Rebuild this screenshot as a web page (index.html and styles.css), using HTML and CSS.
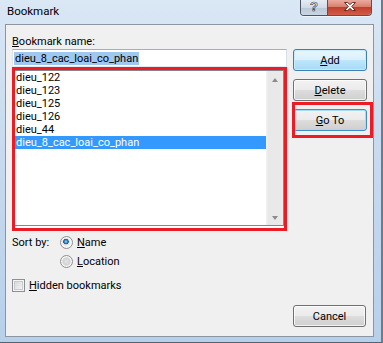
FILE: index.html
```html
<!DOCTYPE html>
<html lang="en">
<head>
  <meta charset="UTF-8" />
  <meta name="viewport" content="width=device-width, initial-scale=1.0"/>
  <title>Bookmark</title>
  <link rel="stylesheet" href="styles.css">
</head>
<body>
  <div class="window">
    <div class="titlebar">
      <span class="title">Bookmark</span>
      <div class="caption">
        <div class="cap-help">?</div>
        <div class="cap-close">
          <svg width="12" height="9" viewBox="0 0 12 9">
            <polygon points="0.5,0.5 3.6,0.5 6,2.6 8.4,0.5 11.5,0.5 7.7,4.5 11.5,8.5 8.4,8.5 6,6.4 3.6,8.5 0.5,8.5 4.3,4.5" fill="#fff" stroke="#5b1d14" stroke-width="0.9" stroke-linejoin="round"/>
          </svg>
        </div>
      </div>
    </div>

    <div class="client">
      <label class="field-label"><u>B</u>ookmark name:</label>

      <div class="left">
        <div class="textbox"><span class="sel">dieu_8_cac_loai_co_phan</span></div>

        <div class="mark">
          <div class="listbox">
            <ul class="items">
              <li>dieu_122</li>
              <li>dieu_123</li>
              <li>dieu_125</li>
              <li>dieu_126</li>
              <li>dieu_44</li>
              <li class="selected">dieu_8_cac_loai_co_phan</li>
            </ul>
            <div class="scrollbar">
              <span class="arrow up"></span>
              <span class="arrow down"></span>
            </div>
          </div>
        </div>

        <div class="sort">
          <span class="sort-label">Sort by:</span>
          <div class="radios">
            <div class="opt"><span class="radio checked"></span><span><u>N</u>ame</span></div>
            <div class="opt"><span class="radio"></span><span><u>L</u>ocation</span></div>
          </div>
        </div>

        <div class="opt hidden-opt"><span class="check"></span><span><u>H</u>idden bookmarks</span></div>
      </div>

      <div class="right">
        <button class="btn btn-default"><u>A</u>dd</button>
        <button class="btn"><u>D</u>elete</button>
        <button class="btn btn-focus marked"><u>G</u>o To</button>
        <button class="btn btn-cancel">Cancel</button>
      </div>
    </div>
  </div>
</body>
</html>
```

FILE: styles.css
```css
* {
  box-sizing: border-box;
}
body {
  margin: 0;
  background: #4f5e6d;
  font-family: Roboto, "Liberation Sans", sans-serif;
  font-size: 11px;
  color: #000;
}
.window {
  width: 383px;
  height: 343px;
  display: flex;
  flex-direction: column;
  overflow: hidden;
  background: linear-gradient(180deg, #dae7f5 0%, #c9dbef 40%, #b7d0ea 100%);
  border-right: 2px solid #6d7b8a;
  border-bottom: 1px solid #56626f;
}
.titlebar {
  height: 24px;
  flex: none;
  display: flex;
  justify-content: space-between;
  align-items: flex-start;
  padding: 0 9px 0 7px;
}
.title {
  font-size: 11.5px;
  line-height: 13px;
  padding-top: 5px;
}
.caption {
  display: flex;
  height: 16px;
  border: 1px solid #4a5664;
  border-top: none;
  border-radius: 0 0 4px 4px;
  overflow: hidden;
  box-shadow: 0 1px 0 rgba(255, 255, 255, 0.6);
}
.cap-help {
  width: 27px;
  border-right: 1px solid #4a5664;
  background: linear-gradient(180deg, #e6ecf3 0%, #d0dbe7 50%, #b9c8d8 51%, #c9d6e3 100%);
  color: #fff;
  font-family: "Liberation Sans", sans-serif;
  font-weight: bold;
  font-size: 13px;
  line-height: 14px;
  text-align: center;
  -webkit-text-stroke: 0.7px #3a4755;
}
.cap-close {
  width: 43px;
  display: flex;
  align-items: center;
  justify-content: center;
  padding-bottom: 2px;
  background: linear-gradient(180deg, #e9ab9f 0%, #d8806e 45%, #c33f2d 50%, #cf5e49 100%);
}
.client {
  flex: 1;
  margin: 0 7px 5px 5px;
  border: 1px solid #8b96a2;
  background: #f0f0f0;
  display: grid;
  grid-template-columns: 275px 74px;
  grid-template-rows: auto 1fr;
  column-gap: 6px;
  padding: 10px 6px 9px 6px;
}
.field-label {
  grid-column: 1;
  line-height: 13px;
  margin-bottom: 1px;
}
.left {
  grid-column: 1;
  grid-row: 2;
  display: flex;
  flex-direction: column;
}
.textbox {
  height: 18px;
  border: 1px solid #abadb3;
  border-color: #abadb3 #dbdfe6 #e3e9ef #e2e3ea;
  background: #fff;
  display: flex;
  align-items: center;
  padding-left: 1px;
}
.sel {
  background: #9fc8f1;
  line-height: 13px;
  padding: 0 1px;
}
.mark {
  height: 164px;
  border: 3px solid #ed1c24;
  background: #fff;
}
.listbox {
  height: 156px;
  display: flex;
  border-top: 1px solid #82878f;
  border-right: 1px solid #82878f;
  border-bottom: 1px solid #82878f;
}
.items {
  flex: 1;
  list-style: none;
  margin: 0;
  padding: 0;
}
.items li {
  line-height: 13px;
  padding-left: 1px;
  white-space: nowrap;
}
.items li.selected {
  background: #3399ff;
  color: #fff;
}
.scrollbar {
  width: 17px;
  flex: none;
  display: flex;
  flex-direction: column;
  justify-content: space-between;
  background: linear-gradient(90deg, #f4f4f4 0px, #e9e9e9 2px, #e9e9e9 15px, #eeeeee 17px);
}
.arrow {
  height: 17px;
  display: flex;
  align-items: center;
  justify-content: center;
}
.arrow::before {
  content: "";
  width: 0;
  height: 0;
  border-left: 3.5px solid transparent;
  border-right: 3.5px solid transparent;
}
.arrow.up::before {
  border-bottom: 4px solid #8c8c8c;
}
.arrow.down {
  padding-top: 3px;
}
.arrow.down::before {
  border-top: 4px solid #8c8c8c;
}
.sort {
  display: flex;
  margin-top: 2px;
}
.sort-label {
  width: 48px;
  line-height: 19px;
}
.radios {
  display: flex;
  flex-direction: column;
}
.opt {
  display: flex;
  align-items: center;
  height: 19px;
  gap: 4px;
}
.radio {
  width: 13px;
  height: 13px;
  border-radius: 50%;
  border: 1px solid #8e8f8f;
  background: radial-gradient(circle closest-side, #e4e4e4 0%, #d3d3d3 60%, #f4f4f4 100%);
  box-shadow: inset 0 0 0 1px #f8f8f8;
}
.radio.checked {
  background: radial-gradient(circle closest-side at 45% 42%, #a8dbf7 0%, #3a8fce 30%, #1b5a8c 55%, #dcdcdc 64%, #f4f4f4 100%);
}
.hidden-opt {
  margin-top: 7px;
  height: 15px;
}
.check {
  width: 13px;
  height: 13px;
  border: 1px solid #8e8f8f;
  background: linear-gradient(135deg, #d2d2d2 0%, #e6e6e6 50%, #fbfbfb 100%);
  box-shadow: inset 0 0 0 1px #f4f4f4, inset 0 0 0 2px #c9cbce;
}
.right {
  grid-column: 2;
  grid-row: 2;
  display: flex;
  flex-direction: column;
  gap: 8px;
}
.btn {
  position: relative;
  width: 74px;
  height: 22px;
  padding: 0;
  border: 1px solid #707070;
  border-radius: 3px;
  background: linear-gradient(180deg, #f2f2f2 0%, #ebebeb 50%, #dddddd 51%, #cfcfcf 100%);
  box-shadow: inset 0 0 0 1px rgba(255, 255, 255, 0.75);
  font: inherit;
  color: #000;
}
.btn-default {
  border-color: #3c7fb1;
  background: linear-gradient(180deg, #eaf6fd 0%, #d9f0fc 50%, #bee6fd 51%, #a7d9f5 100%);
  box-shadow: inset 0 0 0 1px #c8ecfd;
}
.btn-focus {
  border-color: #3c8fc8;
  box-shadow: inset 0 0 0 1px #a6dcf6;
}
.marked::after {
  content: "";
  position: absolute;
  top: -8px;
  left: -2px;
  right: -7px;
  bottom: -8px;
  border: 3px solid #ed1c24;
}
.btn-cancel {
  margin-top: auto;
  width: 73px;
}
```
